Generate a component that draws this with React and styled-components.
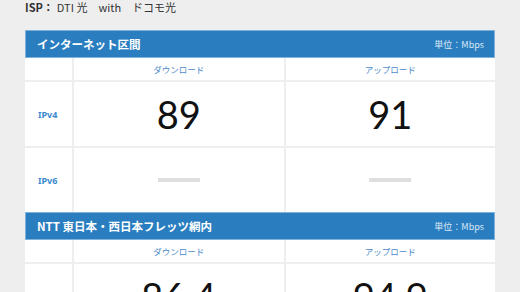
import React from "react";
import styled, {createGlobalStyle} from "styled-components";

const GlobalStyle = createGlobalStyle`
  html, body {
    margin: 0;
    padding: 0;
    background: #eeeeee;
  }
  body {
    font-family: "Noto Sans", "Noto Sans CJK JP", sans-serif;
    color: #333;
  }
`;

const Page = styled.div`
  padding: 0 25px;
  width: 470px;
`;

const IspLine = styled.p`
  margin: 0;
  height: 16px;
  line-height: 14px;
  font-size: 11px;
  font-family: "Noto Sans CJK JP", sans-serif;
  color: #333;
  margin-bottom: 14px;

  b {
    font-weight: 700;
    margin-right: 3px;
  }
`;

const Section = styled.section`
  width: 470px;
`;

const Header = styled.div`
  display: flex;
  align-items: center;
  justify-content: space-between;
  box-sizing: border-box;
  height: 28px;
  padding: 0 10px 0 11px;
  background: #2a7ec0;
  border: 1px solid #7fb3de;
  color: #fff;
`;

const Title = styled.h2`
  margin: 0;
  font-size: 11.5px;
  font-weight: 700;
  font-family: "Noto Sans CJK JP", sans-serif;
  letter-spacing: 0;
`;

const Unit = styled.span`
  font-size: 9px;
  font-family: "Noto Sans CJK JP", sans-serif;
  color: #dbe9f6;
`;

const Grid = styled.div`
  display: grid;
  grid-template-columns: 47px 1fr 1fr;
  grid-auto-rows: 64px;
  grid-template-rows: 22px;
  gap: 2px;
  background: #eeeeee;
`;

const Cell = styled.div`
  display: flex;
  align-items: center;
  justify-content: ${p => (p.$label ? "flex-start" : "center")};
  padding-left: ${p => (p.$label ? "13px" : "0")};
  background: #fff;
`;

const ColHead = styled.span`
  font-size: 8.5px;
  font-family: "Noto Sans CJK JP", sans-serif;
  color: #4d8ccb;
`;

const RowLabel = styled.span`
  font-size: 9px;
  font-weight: 700;
  font-family: "Noto Sans", sans-serif;
  color: #3a88cf;
`;

const Speed = styled.span`
  font-size: 38px;
  font-family: "Lato", sans-serif;
  font-weight: 400;
  color: #111;
  line-height: 1;
`;

const NoData = styled.span`
  display: block;
  width: 42px;
  height: 4px;
  background: #dedede;
`;

const sections = [
  {
    title: "インターネット区間",
    rows: [
      {label: "IPv4", down: "89", up: "91"},
      {label: "IPv6", down: null, up: null}
    ]
  },
  {
    title: "NTT 東日本・西日本フレッツ網内",
    rows: [
      {label: "IPv4", down: "86.4", up: "94.9"}
    ]
  }
];

const Value = ({value}) => (value ? <Speed>{value}</Speed> : <NoData/>);

export default function App() {
  return (
    <Page>
      <GlobalStyle/>
      <IspLine><b>ISP：</b>DTI 光　with　ドコモ光</IspLine>
      {
        sections.map((section, index) => (
          <Section key={index}>
            <Header>
              <Title>{section.title}</Title>
              <Unit>単位：Mbps</Unit>
            </Header>
            <Grid>
              <Cell $label/>
              <Cell><ColHead>ダウンロード</ColHead></Cell>
              <Cell><ColHead>アップロード</ColHead></Cell>
              {
                section.rows.map(row => (
                  <React.Fragment key={row.label}>
                    <Cell $label><RowLabel>{row.label}</RowLabel></Cell>
                    <Cell><Value value={row.down}/></Cell>
                    <Cell><Value value={row.up}/></Cell>
                  </React.Fragment>
                ))
              }
            </Grid>
          </Section>
        ))
      }
    </Page>
  );
}
